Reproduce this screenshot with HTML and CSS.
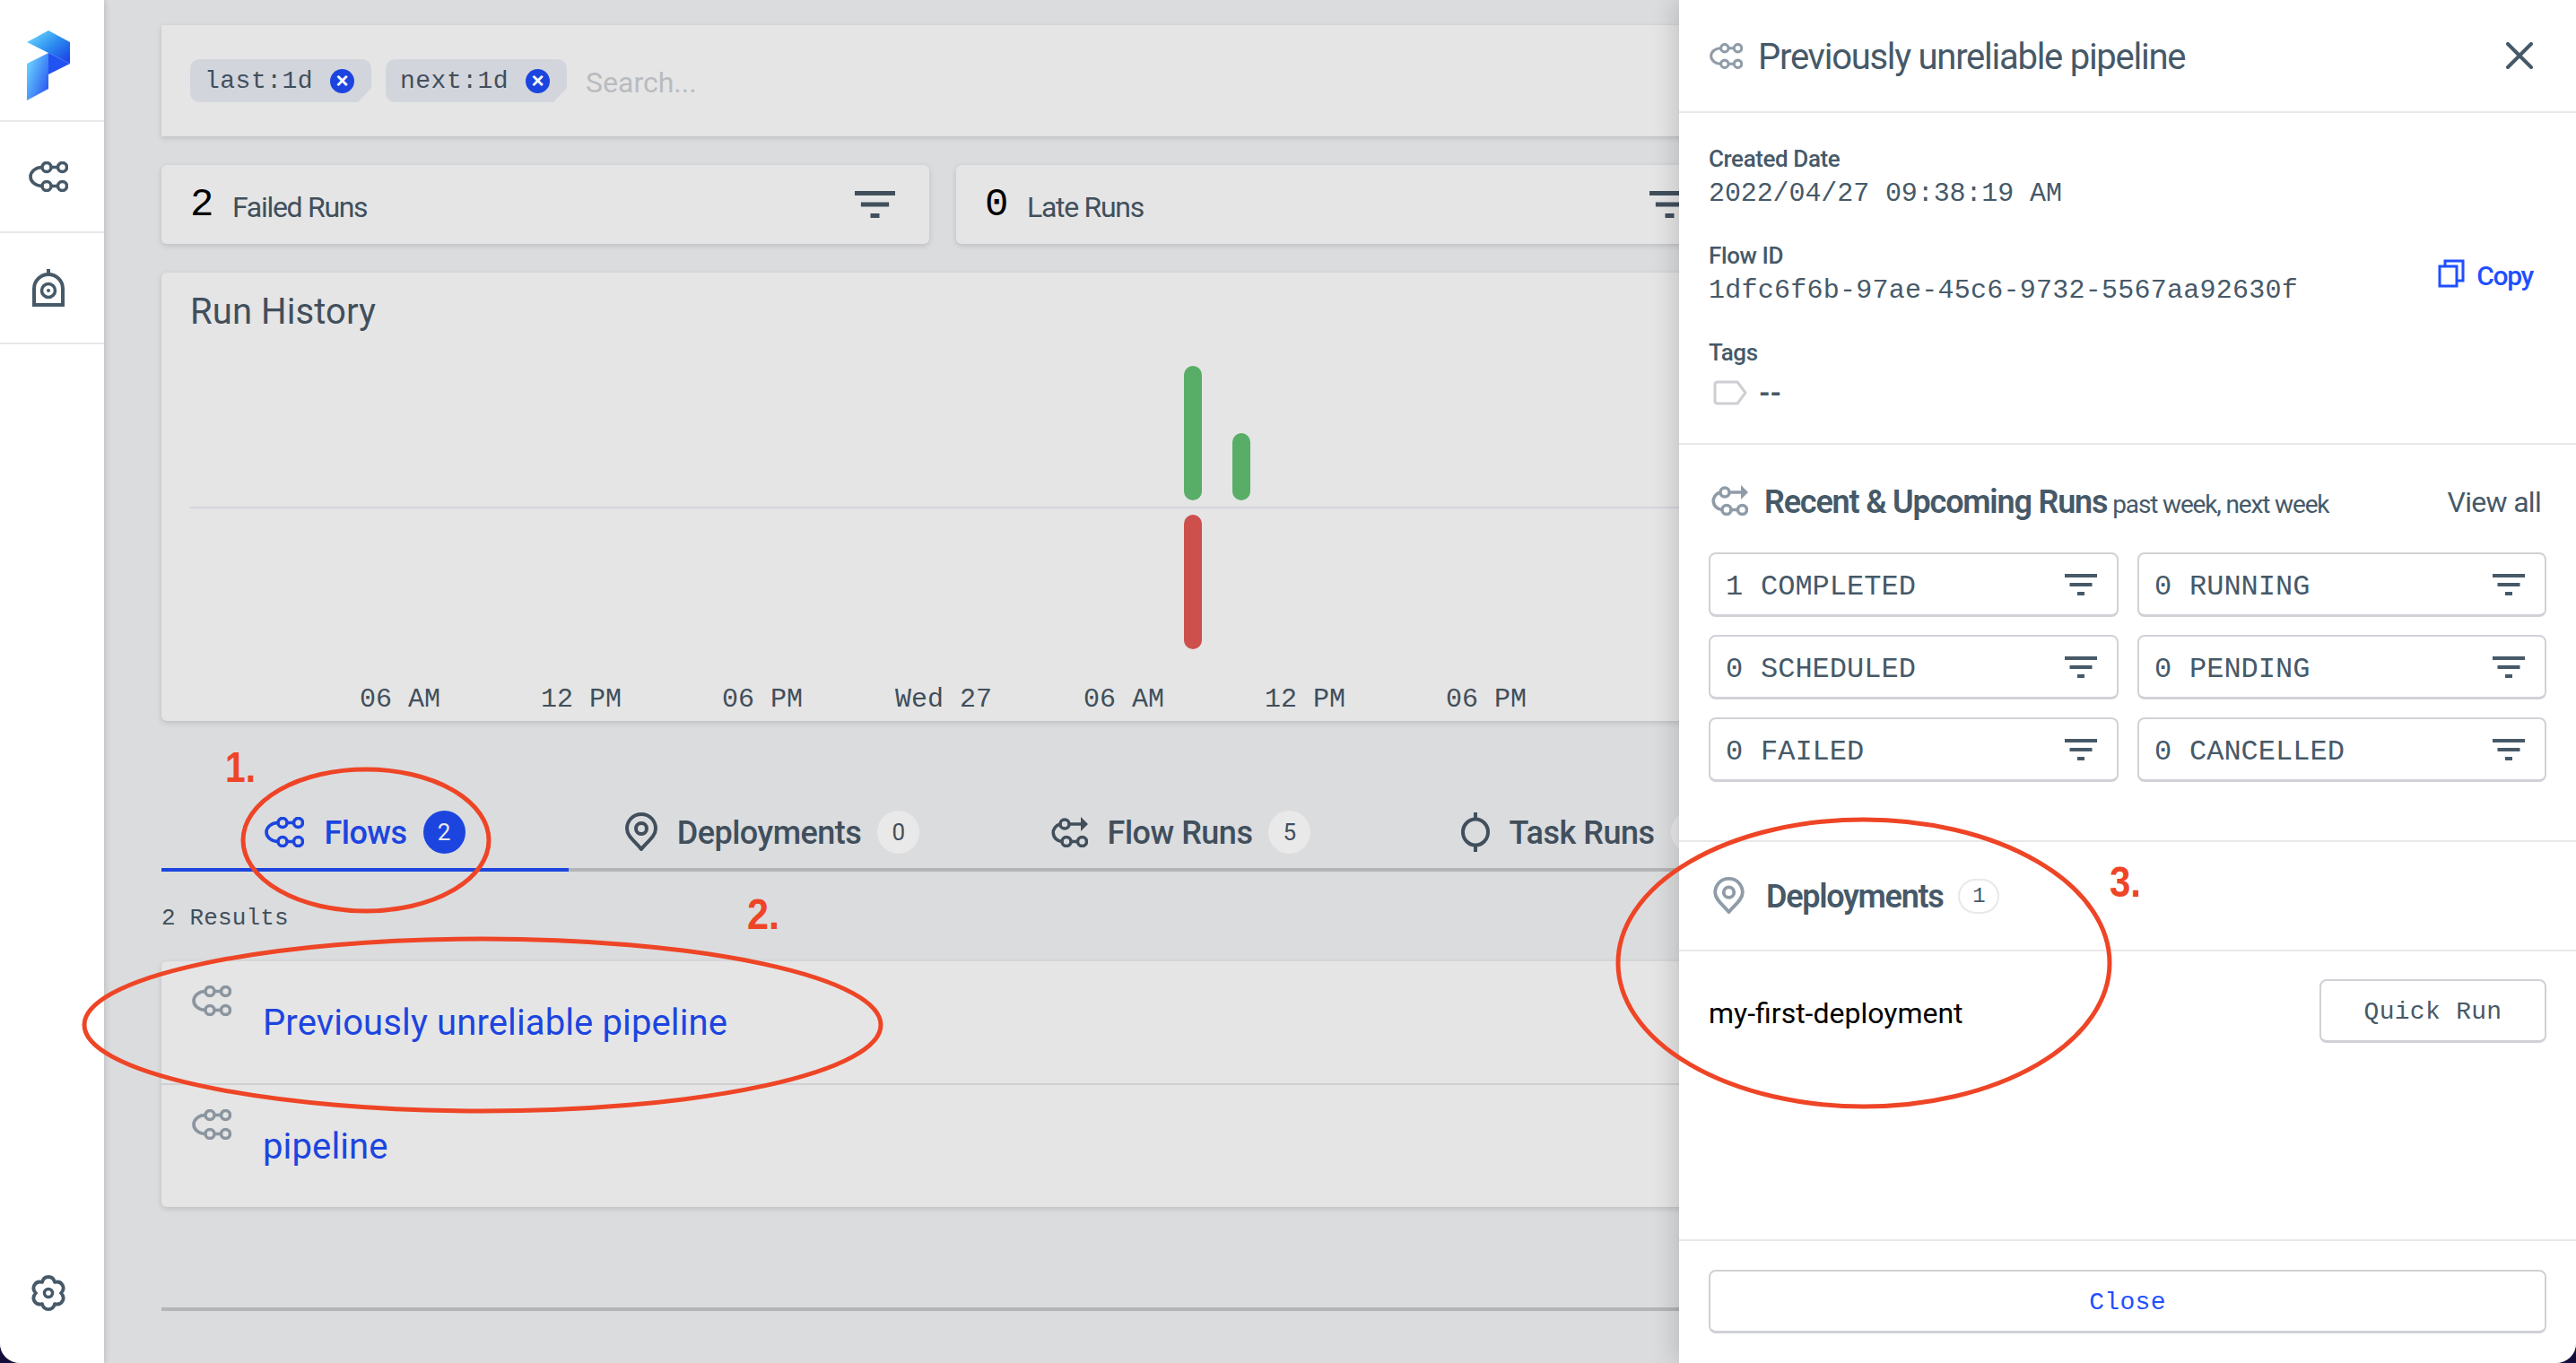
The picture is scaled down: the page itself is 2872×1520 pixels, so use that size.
FILE: index.html
```html
<!DOCTYPE html>
<html lang="en">
<head>
<meta charset="utf-8">
<title>Flows</title>
<link rel="stylesheet" href="styles.css">
</head>
<body>
<svg class="defs" width="0" height="0" aria-hidden="true">
  <symbol id="i-flow" viewBox="0 0 44 34">
    <g fill="none" stroke="currentColor" stroke-width="3.6">
      <circle cx="20" cy="6.500" r="5"/><circle cx="37.500" cy="6.500" r="5"/>
      <circle cx="20" cy="27.500" r="5"/><circle cx="37.500" cy="27.500" r="5"/>
      <path d="M25 6.500H32.500M25 27.500H32.500M15 6.500A13 10.500 0 0 0 15 27.500"/>
    </g>
  </symbol>
  <symbol id="i-run" viewBox="0 0 44 34">
    <g fill="none" stroke="currentColor" stroke-width="3.6">
      <circle cx="18" cy="8" r="5"/>
      <circle cx="20" cy="27.500" r="5"/><circle cx="37.500" cy="27.500" r="5"/>
      <path d="M23 8H38M25 27.500H32.500M13 8A11 10 0 0 0 15 27.500"/>
    </g>
    <path d="M36 0L44 8L36 16Z" fill="currentColor"/>
  </symbol>
  <symbol id="i-pin" viewBox="0 0 36 44">
    <path d="M18 2C8 2 2 10 2 18C2 27 12 33 18 41C24 33 34 27 34 18C34 10 28 2 18 2Z" fill="none" stroke="currentColor" stroke-width="4" stroke-linejoin="round"/>
    <circle cx="18" cy="18" r="6" fill="none" stroke="currentColor" stroke-width="4"/>
  </symbol>
  <symbol id="i-task" viewBox="0 0 32 44">
    <ellipse cx="16" cy="22" rx="14" ry="14.5" fill="none" stroke="currentColor" stroke-width="4"/>
    <path d="M16 0V8M16 36V44" stroke="currentColor" stroke-width="4"/>
  </symbol>
  <symbol id="i-filter" viewBox="0 0 36 24">
    <rect x="0" y="0" width="36" height="4" fill="currentColor"/>
    <rect x="5.500" y="10" width="25" height="4" fill="currentColor"/>
    <rect x="14" y="20" width="8" height="4" fill="currentColor"/>
  </symbol>
</svg>

<div class="app">
  <nav class="sidebar">
    <div class="nav-cell">
      <svg class="logo" viewBox="0 0 48 78">
        <defs>
          <linearGradient id="lg1" x1="0.1" y1="0" x2="1" y2="0.8"><stop offset="0" stop-color="#6fdcff"/><stop offset="0.55" stop-color="#2b8cf0"/><stop offset="1" stop-color="#1d49e8"/></linearGradient>
          <linearGradient id="lg2" x1="0" y1="0.1" x2="1" y2="0.9"><stop offset="0" stop-color="#6fdcff"/><stop offset="1" stop-color="#2550f0"/></linearGradient>
        </defs>
        <path d="M0 13L24 0L48 13V37L24 25Z" fill="url(#lg1)"/>
        <path d="M24 25L48 37L24 49Z" fill="#2252f2"/>
        <path d="M0 37L24 25V65L0 78Z" fill="url(#lg2)"/>
      </svg>
    </div>
    <div class="nav-cell"><svg class="ico-flow"><use href="#i-flow"/></svg></div>
    <div class="nav-cell">
      <svg class="ico-bell" viewBox="0 0 36 42">
        <path d="M2 40V22A16 16 0 0 1 34 22V40Z" fill="none" stroke="currentColor" stroke-width="4"/>
        <path d="M18 0V7" stroke="currentColor" stroke-width="4"/>
        <circle cx="18" cy="24" r="7.500" fill="none" stroke="currentColor" stroke-width="3.500"/>
        <circle cx="18" cy="24" r="2" fill="currentColor"/>
      </svg>
    </div>
    <div class="nav-foot">
      <svg class="ico-gear" viewBox="0 0 40 40">
        <path d="M13 7.900C15 0 25 0 27 7.900C34.820 5.670 39.820 14.330 34 20C39.820 25.670 34.820 34.330 27 32.100C25 40 15 40 13 32.100C5.180 34.330 0.180 25.670 6 20C0.180 14.330 5.180 5.670 13 7.900Z" fill="none" stroke="currentColor" stroke-width="3.800" stroke-linejoin="round"/>
        <circle cx="20" cy="20" r="4.500" fill="none" stroke="currentColor" stroke-width="3.500"/>
      </svg>
    </div>
  </nav>

  <main class="main">
    <section class="search-card">
      <span class="chip"><span class="chip-text">last:1d</span><span class="chip-x">×</span></span>
      <span class="chip"><span class="chip-text">next:1d</span><span class="chip-x">×</span></span>
      <span class="search-ph">Search...</span>
    </section>

    <section class="stats">
      <div class="stat"><span class="stat-num">2</span><span class="stat-label">Failed Runs</span><svg class="ico-filter-lg"><use href="#i-filter"/></svg></div>
      <div class="stat"><span class="stat-num">0</span><span class="stat-label">Late Runs</span><svg class="ico-filter-lg"><use href="#i-filter"/></svg></div>
    </section>

    <section class="history">
      <h2 class="history-title">Run History</h2>
      <svg class="chart" viewBox="0 0 2628 436" width="2628" height="436">
        <rect class="zero" x="32" y="197" width="2596" height="2"/>
        <rect class="bar-ok" x="1140" y="40" width="20" height="150" rx="10"/>
        <rect class="bar-ok" x="1194" y="115" width="20" height="75" rx="10"/>
        <rect class="bar-bad" x="1140" y="206" width="20" height="150" rx="10"/>
        <text class="tick" x="266" y="420">06 AM</text>
        <text class="tick" x="468" y="420">12 PM</text>
        <text class="tick" x="670" y="420">06 PM</text>
        <text class="tick" x="872" y="420">Wed 27</text>
        <text class="tick" x="1073" y="420">06 AM</text>
        <text class="tick" x="1275" y="420">12 PM</text>
        <text class="tick" x="1477" y="420">06 PM</text>
      </svg>
    </section>

    <div class="tabs">
      <div class="tab tab-active"><svg class="ico-flow"><use href="#i-flow"/></svg><span class="tab-label">Flows</span><span class="tab-badge">2</span></div>
      <div class="tab"><svg class="ico-pin"><use href="#i-pin"/></svg><span class="tab-label">Deployments</span><span class="tab-badge">0</span></div>
      <div class="tab"><svg class="ico-flow"><use href="#i-run"/></svg><span class="tab-label">Flow Runs</span><span class="tab-badge">5</span></div>
      <div class="tab"><svg class="ico-task"><use href="#i-task"/></svg><span class="tab-label">Task Runs</span><span class="tab-badge">0</span></div>
    </div>

    <div class="results">2 Results</div>

    <section class="list">
      <div class="row"><svg class="ico-flow row-ico"><use href="#i-flow"/></svg><a class="row-name">Previously unreliable pipeline</a></div>
      <div class="row"><svg class="ico-flow row-ico"><use href="#i-flow"/></svg><a class="row-name">pipeline</a></div>
    </section>

    <div class="foot-rule"></div>
  </main>

  <aside class="panel">
    <header class="panel-head">
      <svg class="ico-flow-sm"><use href="#i-flow"/></svg>
      <h1 class="panel-title">Previously unreliable pipeline</h1>
      <svg class="ico-close" viewBox="0 0 30 30"><path d="M2 2L28 28M28 2L2 28" stroke="currentColor" stroke-width="4" stroke-linecap="round"/></svg>
    </header>

    <section class="details">
      <div class="field"><div class="field-label">Created Date</div><div class="field-value field-date">2022/04/27 09:38:19 AM</div></div>
      <div class="field field-copy">
        <div><div class="field-label">Flow ID</div><div class="field-value field-id">1dfc6f6b-97ae-45c6-9732-5567aa92630f</div></div>
        <div class="copy">
          <svg class="ico-copy" viewBox="0 0 30 32"><path d="M2 8H21V30H2Z M8 8V2H28V24H21" fill="none" stroke="currentColor" stroke-width="3"/></svg>
          <span class="copy-text">Copy</span>
        </div>
      </div>
      <div class="field">
        <div class="field-label">Tags</div>
        <div class="tag-line">
          <svg class="ico-tag" viewBox="0 0 38 28"><path d="M2 5Q2 2 5 2H27L36 14L27 26H5Q2 26 2 23Z" fill="none" stroke="currentColor" stroke-width="3" stroke-linejoin="round"/></svg>
          <span class="tag-none">--</span>
        </div>
      </div>
    </section>

    <section class="runs">
      <div class="runs-head">
        <svg class="ico-run-sm"><use href="#i-run"/></svg>
        <h3 class="runs-title">Recent &amp; Upcoming Runs</h3>
        <span class="runs-sub">past week, next week</span>
        <span class="view-all">View all</span>
      </div>
      <div class="run-grid">
        <div class="run-btn"><span class="run-num">1</span><span class="run-state">COMPLETED</span><svg class="ico-filter"><use href="#i-filter"/></svg></div>
        <div class="run-btn"><span class="run-num">0</span><span class="run-state">RUNNING</span><svg class="ico-filter"><use href="#i-filter"/></svg></div>
        <div class="run-btn"><span class="run-num">0</span><span class="run-state">SCHEDULED</span><svg class="ico-filter"><use href="#i-filter"/></svg></div>
        <div class="run-btn"><span class="run-num">0</span><span class="run-state">PENDING</span><svg class="ico-filter"><use href="#i-filter"/></svg></div>
        <div class="run-btn"><span class="run-num">0</span><span class="run-state">FAILED</span><svg class="ico-filter"><use href="#i-filter"/></svg></div>
        <div class="run-btn"><span class="run-num">0</span><span class="run-state">CANCELLED</span><svg class="ico-filter"><use href="#i-filter"/></svg></div>
      </div>
    </section>

    <section class="deploy-head">
      <svg class="ico-pin-sm"><use href="#i-pin"/></svg>
      <h3 class="deploy-title">Deployments</h3>
      <span class="deploy-badge">1</span>
    </section>

    <section class="deploy-body">
      <span class="deploy-name">my-first-deployment</span>
      <button class="btn btn-quick">Quick Run</button>
    </section>

    <footer class="panel-foot">
      <button class="btn btn-close">Close</button>
    </footer>
  </aside>

  <svg class="marks" viewBox="0 0 2872 1520" width="2872" height="1520">
    <ellipse cx="408" cy="937" rx="137" ry="79"/>
    <ellipse cx="538" cy="1143" rx="444" ry="96"/>
    <ellipse cx="2078" cy="1074" rx="274" ry="160"/>
    <text x="251" y="872" textLength="34" lengthAdjust="spacingAndGlyphs">1.</text>
    <text x="833" y="1036" textLength="36" lengthAdjust="spacingAndGlyphs">2.</text>
    <text x="2352" y="1000" textLength="35" lengthAdjust="spacingAndGlyphs">3.</text>
  </svg>
</div>
</body>
</html>
```

FILE: styles.css
```css
* { box-sizing: border-box; }
html, body { margin: 0; padding: 0; }
body {
  width: 2872px;
  height: 1520px;
  overflow: hidden;
  background: #140f3a;
  font-family: Roboto, "Liberation Sans", sans-serif;
  color: #465968;
}
h1, h2, h3 { margin: 0; font: inherit; }
.defs { position: absolute; }

.app {
  position: relative;
  display: flex;
  width: 2872px;
  height: 1520px;
  overflow: hidden;
  border-radius: 0 0 22px 22px;
  background: #dbdcde;
}

/* sidebar */
.sidebar {
  width: 116px;
  flex: none;
  display: flex;
  flex-direction: column;
  background: #fff;
  color: #465968;
  box-shadow: 2px 0 6px rgba(0, 0, 0, .12);
  z-index: 1;
}
.nav-cell {
  height: 124px;
  padding-right: 8px;
  display: flex;
  align-items: center;
  justify-content: center;
  border-bottom: 2px solid #e8e8e8;
}
.nav-cell:first-child { height: 136px; align-items: flex-start; padding-top: 34px; }
.logo { width: 48px; height: 78px; }
.ico-flow { width: 44px; height: 34px; flex: none; }
.ico-bell { width: 36px; height: 42px; }
.nav-foot {
  margin-top: auto;
  padding: 0 8px 58px 0;
  display: flex;
  justify-content: center;
}
.ico-gear { width: 40px; height: 40px; }

/* main */
.main {
  flex: 1;
  min-width: 0;
  padding: 28px 64px 0;
  color: #414f5c;
}
.search-card {
  height: 124px;
  padding: 38px 32px 0;
  display: flex;
  align-items: flex-start;
  gap: 16px;
  background: #e5e5e5;
  box-shadow: 0 2px 6px rgba(0, 0, 0, .14);
}
.chip {
  width: 202px;
  height: 48px;
  display: flex;
  align-items: center;
  padding-left: 16px;
  background: #d3d5dd;
  clip-path: path("M12 0H190Q202 0 202 12V32L187 48H12Q0 48 0 36V12Q0 0 12 0Z");
}
.chip-text {
  padding-top: 2px;
  font: 28px/48px "Liberation Mono", monospace;
  letter-spacing: .5px;
  color: #414f5c;
}
.chip-x {
  width: 27px;
  height: 27px;
  margin-left: 19px;
  border-radius: 50%;
  background: #1c45df;
  color: #fff;
  font: 700 24px/26px "Liberation Sans", sans-serif;
  text-align: center;
}
.search-ph {
  margin: 2px 0 0 5px;
  font-size: 32px;
  line-height: 48px;
  color: #b9bbbf;
}

.stats {
  margin-top: 32px;
  display: grid;
  grid-template-columns: repeat(3, 856px);
  gap: 30px;
}
.stat {
  height: 88px;
  padding: 0 38px 0 32px;
  display: flex;
  align-items: center;
  background: #e5e5e5;
  border-radius: 6px;
  box-shadow: 0 2px 6px rgba(0, 0, 0, .14);
}
.stat-num {
  font: 44px/44px "Liberation Mono", monospace;
  color: #000;
  width: 47px;
}
.stat-label { font-size: 32px; letter-spacing: -1.3px; flex: 1; padding-top: 6px; }
.ico-filter-lg { width: 45px; height: 32px; }

.history {
  margin-top: 32px;
  height: 500px;
  background: #e5e5e5;
  border-radius: 6px;
  box-shadow: 0 2px 6px rgba(0, 0, 0, .14);
  padding-top: 20px;
}
.history-title {
  margin-left: 32px;
  padding-top: 2px;
  height: 44px;
  font-size: 40px;
  line-height: 44px;
  letter-spacing: .1px;
}
.chart { display: block; }
.zero { fill: #d3d5dd; }
.bar-ok { fill: #58ae66; }
.bar-bad { fill: #cd504c; }
.tick {
  font: 30px "Liberation Mono", monospace;
  fill: #414f5c;
  text-anchor: middle;
}

.tabs {
  margin-top: 84px;
  display: flex;
  border-bottom: 4px solid #b4b5b7;
}
.tab {
  width: 454px;
  height: 84px;
  margin-bottom: -4px;
  border-bottom: 4px solid transparent;
  display: flex;
  align-items: center;
  justify-content: center;
  gap: 18px;
  color: #414f5c;
}
.tab-active { border-bottom-color: #1c45df; color: #1c45df; }
.ico-pin { width: 36px; height: 44px; flex: none; }
.ico-task { width: 32px; height: 44px; flex: none; }
.tab-label { margin-left: 4px; padding-top: 2px; font-size: 36px; font-weight: 500; letter-spacing: -.5px; }
.tab-badge {
  width: 47px;
  height: 48px;
  border-radius: 50%;
  background: #e9e9ea;
  font: 26px/48px Roboto, sans-serif;
  text-align: center;
}
.tab-active .tab-badge { background: #1c45df; color: #e9e9ea; }

.results {
  margin-top: 32px;
  padding-top: 2px;
  height: 36px;
  font: 26px/36px "Liberation Mono", monospace;
  letter-spacing: .15px;
}
.list {
  margin-top: 32px;
  background: #e5e5e5;
  border-radius: 6px;
  box-shadow: 0 2px 6px rgba(0, 0, 0, .14);
}
.row {
  height: 136px;
  padding-left: 34px;
  display: flex;
  align-items: flex-start;
  gap: 35px;
  color: #8a959f;
}
.row + .row { height: 138px; border-top: 2px solid #cfd0d1; }
.row-ico { margin-top: 27px; }
.row-name {
  margin-top: 45px;
  font-size: 40px;
  line-height: 48px;
  letter-spacing: .13px;
  color: #1c45df;
}
.foot-rule { margin-top: 112px; height: 4px; background: #b4b5b7; }

/* drawer */
.panel {
  position: absolute;
  top: 0;
  right: 0;
  bottom: 0;
  width: 1000px;
  display: flex;
  flex-direction: column;
  background: #fff;
  box-shadow: -6px 0 24px rgba(0, 0, 0, .14);
  color: #465968;
}
.panel-head {
  height: 126px;
  flex: none;
  padding: 0 48px 0 34px;
  display: flex;
  align-items: center;
  border-bottom: 2px solid #e8e8e8;
}
.ico-flow-sm { width: 37px; height: 29px; color: #8f9ca8; flex: none; }
.panel-title { flex: 1; margin-left: 17px; padding-top: 3px; font-size: 40px; letter-spacing: -1.27px; }
.ico-close { width: 30px; height: 30px; }

.details {
  height: 370px;
  flex: none;
  padding: 35px 48px 0 33px;
  display: flex;
  flex-direction: column;
  gap: 31px;
  border-bottom: 2px solid #e8e8e8;
}
.field-label { font-size: 26px; font-weight: 500; line-height: 32px; letter-spacing: -.4px; }
.field-value {
  margin-top: 1px;
  font: 30px/44px "Liberation Mono", monospace;
}
.field-date { letter-spacing: -.1px; }
.field-id { letter-spacing: .25px; }
.field-copy { display: flex; justify-content: space-between; align-items: center; }
.copy { display: flex; align-items: center; gap: 13px; color: #1f4fff; }
.ico-copy { width: 30px; height: 32px; margin-top: -6px; }
.copy-text { font-size: 30px; font-weight: 500; letter-spacing: -1.3px; }
.tag-line { margin-top: 7px; height: 44px; display: flex; align-items: center; gap: 13px; padding-left: 5px; }
.ico-tag { width: 38px; height: 28px; color: #cdcfd3; }
.tag-none { font: 700 32px/44px Roboto, sans-serif; }

.runs {
  height: 443px;
  flex: none;
  padding: 44px 33px 0;
  border-bottom: 2px solid #e8e8e8;
}
.runs-head { display: flex; align-items: center; height: 36px; }
.ico-run-sm { width: 44px; height: 34px; color: #8f9ca8; flex: none; }
.runs-title { margin-left: 18px; padding-top: 3px; font-size: 36px; font-weight: 600; letter-spacing: -1.2px; }
.runs-sub { margin-left: 6px; font-size: 28px; letter-spacing: -1.15px; padding-top: 8px; flex: 1; }
.view-all { font-size: 32px; letter-spacing: -.7px; margin-right: 6px; padding-top: 3px; }
.run-grid {
  margin-top: 40px;
  display: grid;
  grid-template-columns: 457px 456px;
  grid-auto-rows: 72px;
  gap: 20px 21px;
}
.run-btn {
  padding: 0 22px 0 17px;
  display: flex;
  align-items: center;
  border: 2px solid #d0d2d6;
  border-bottom-width: 3px;
  border-radius: 8px;
}
.run-num { font: 32px "Liberation Mono", monospace; width: 39px; padding-top: 6px; }
.run-state { font: 32px "Liberation Mono", monospace; flex: 1; padding-top: 6px; }
.ico-filter { width: 36px; height: 24px; }

.deploy-head {
  height: 122px;
  flex: none;
  padding: 0 33px 0 38px;
  display: flex;
  align-items: center;
  border-bottom: 2px solid #e8e8e8;
}
.ico-pin-sm { width: 35px; height: 42px; color: #8f9ca8; flex: none; }
.deploy-title { margin-left: 24px; padding-top: 2px; font-size: 36px; font-weight: 600; letter-spacing: -1.3px; }
.deploy-badge {
  margin-left: 17px;
  width: 46px;
  height: 39px;
  border: 2px solid #e8e8e8;
  border-radius: 20px;
  font: 24px/35px "Liberation Mono", monospace;
  text-align: center;
}

.deploy-body {
  height: 323px;
  flex: none;
  padding: 31px 33px 0;
  display: flex;
  justify-content: space-between;
  align-items: flex-start;
  border-bottom: 2px solid #e8e8e8;
}
.deploy-name { margin-top: 16px; font-size: 32px; line-height: 44px; color: #000; }
.btn {
  height: 71px;
  padding-top: 3px;
  background: #fff;
  border: 2px solid #cfd1d5;
  border-bottom-width: 3px;
  border-radius: 8px;
  font: 28px "Liberation Mono", monospace;
  letter-spacing: .3px;
  color: #465968;
}
.btn-quick { width: 253px; }
.panel-foot { padding: 32px 33px 0; }
.btn-close { width: 100%; color: #1f4fff; }

/* annotations drawn over the screenshot */
.marks {
  position: absolute;
  top: 0;
  left: 0;
  z-index: 5;
  pointer-events: none;
}
.marks ellipse { fill: none; stroke: #ee4526; stroke-width: 5; }
.marks text {
  font: 700 48px "Liberation Sans", sans-serif;
  fill: #ee4526;
}
```
